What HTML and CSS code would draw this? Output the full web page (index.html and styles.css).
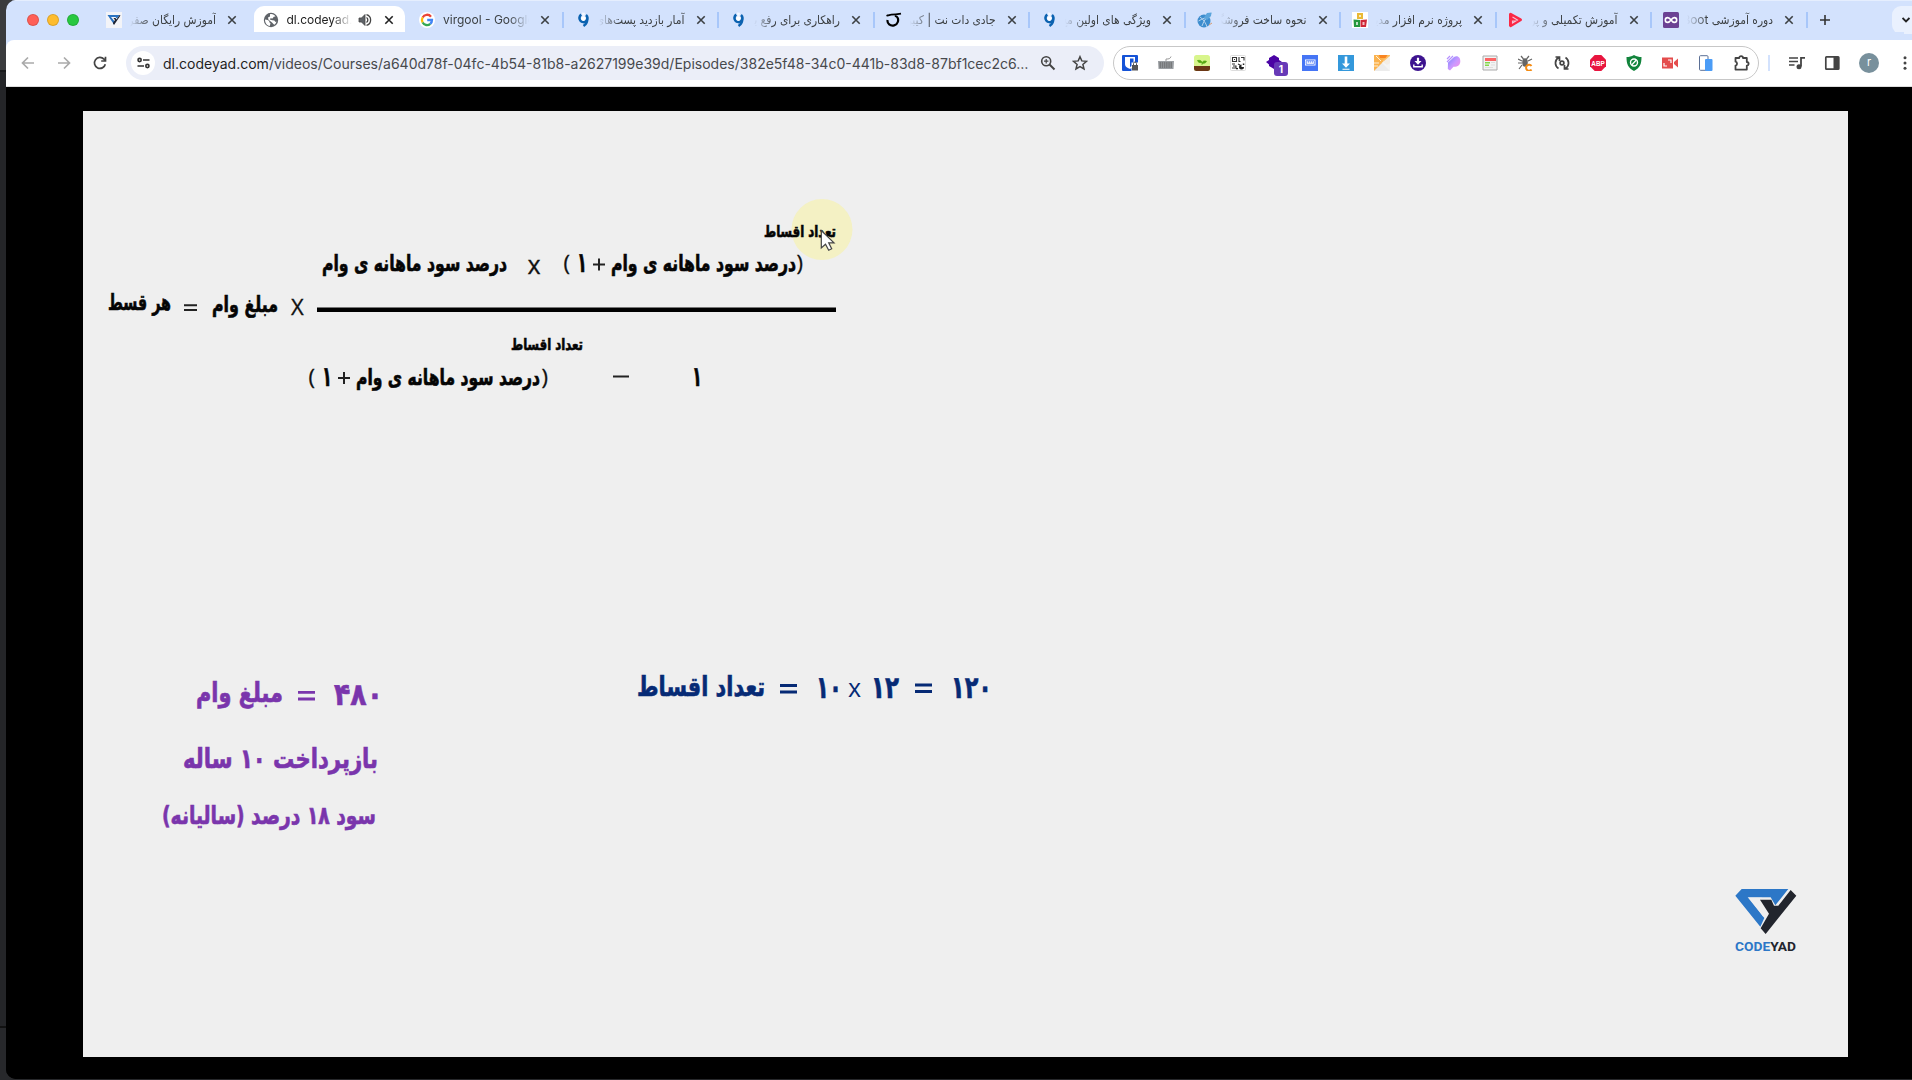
FILE: index.html
```html
<!DOCTYPE html>
<html lang="en">
<head>
<meta charset="utf-8">
<title>dl.codeyad.com</title>
<link rel="stylesheet" href="styles.css">
</head>
<body>
<svg class="defs" width="0" height="0" aria-hidden="true">
  <symbol id="close" viewBox="0 0 10 10"><path d="M1.3 1.3l7.4 7.4M8.7 1.3L1.3 8.7" fill="none" stroke="currentColor" stroke-width="1.6"/></symbol>
  <symbol id="virgool" viewBox="0 0 16 16"><path d="M6.300 2.700A4 4 0 1 0 11 3" fill="none" stroke="#0b62b0" stroke-width="2.600"/><path d="M12 6.500c.5 3.500-1 6-3.500 7.500" fill="none" stroke="#0b62b0" stroke-width="2.600"/><path d="M7 .6l3 .2-.6 3.200-2-.4z" fill="#f4f8ff"/><circle cx="8.400" cy="6.600" r="2.300" fill="#fff"/></symbol>
</svg>
<div class="window">
  <header class="tabs">
    <div class="lights"><i class="red"></i><i class="amber"></i><i class="green"></i></div>
    <div class="tab nosep">
      <svg class="fav" viewBox="0 0 16 16"><path d="M0 0h16v16H0z" fill="#f3f4f8"/><path d="M1.500 3h12L11 6.500 9.500 5H5l4 5-1 2.500z" fill="#2a72c0"/><path d="M14.500 3.500L8 13 6.800 11 9 8 7.500 6h2l1 1.500L13.500 3z" fill="#202432"/></svg>
      <span class="title rtl">آموزش رایگان صفر</span><svg class="x"><use href="#close"/></svg>
    </div>
    <div class="tab active nosep">
      <svg class="fav" viewBox="0 0 16 16"><circle cx="8" cy="8" r="7.200" fill="#5f6368"/><path d="M2 7.500c2 .3 3.600.5 4.200 1.700.4 1 .2 1.500 1.300 2L6.800 14C4 13.500 2 11 2 7.500zM7 2.200c2.500-.5 4.500.6 5.500 2.300l-1.700.3-1.300 1.700-2-.3-.7 1.300 2.500.8 2 .2 1.200 1.500 1-.5c-.4 1.500-1.200 2.500-2.300 3.300L9 10.500 5.500 7.800 5 5.500l2-1z" fill="#fff"/></svg>
      <span class="title short">dl.codeyad.com</span>
      <svg class="audio" viewBox="0 0 14 14"><path d="M1 5h2.500L7 1.500v11L3.500 9H1z" fill="#5f6368" stroke="#444" stroke-width=".8"/><path d="M8.500 4.500a3 3 0 0 1 0 5M8.500 1.600a5.600 5.600 0 0 1 0 10.800" fill="none" stroke="#444" stroke-width="1.300"/></svg>
      <svg class="x"><use href="#close"/></svg>
    </div>
    <div class="tab">
      <svg class="fav" viewBox="0 0 16 16"><circle cx="8" cy="8" r="8" fill="#fff"/><g fill="none" stroke-width="2.300"><path d="M12 4.700A5 5 0 0 0 3.600 5.500" stroke="#ea4335"/><path d="M3.600 5.500a5 5 0 0 0 0 5" stroke="#fbbc05"/><path d="M3.600 10.500A5 5 0 0 0 11.300 11.800" stroke="#34a853"/><path d="M11.300 11.800A5 5 0 0 0 13 8H8.200" stroke="#4285f4"/></g></svg>
      <span class="title">virgool - Google Search</span><svg class="x"><use href="#close"/></svg>
    </div>
    <div class="tab"><svg class="fav"><use href="#virgool"/></svg><span class="title rtl">آمار بازدید پست‌های</span><svg class="x"><use href="#close"/></svg></div>
    <div class="tab"><svg class="fav"><use href="#virgool"/></svg><span class="title rtl">راهکاری برای رفع بلا</span><svg class="x"><use href="#close"/></svg></div>
    <div class="tab">
      <svg class="fav" viewBox="0 0 16 16"><path d="M.5 3.200c1.500 1 3-.6 4.700-.6S10 2.500 15 1.600" fill="none" stroke="#000" stroke-width="1.800"/><path d="M8.800 4C12 4 12.600 7.500 11.800 10 10.700 13.500 6 14.700 3.200 12.400 1.500 11 1.300 9.500 1.600 8" fill="none" stroke="#000" stroke-width="2.200"/></svg>
      <span class="title rtl">جادی دات نت | کیبرد</span><svg class="x"><use href="#close"/></svg>
    </div>
    <div class="tab"><svg class="fav"><use href="#virgool"/></svg><span class="title rtl">ویژگی های اولین مح</span><svg class="x"><use href="#close"/></svg></div>
    <div class="tab">
      <svg class="fav" viewBox="0 0 16 16"><circle cx="7" cy="9" r="6.500" fill="#3d8dce"/><path d="M3 5c3 2 6 6 7 10M1.500 9c5-3 8-4 12-4M5 14C7 8 10 4 15 1" fill="none" stroke="#b5d3ee" stroke-width="1"/><path d="M7 5.500L10 1l4.500-.5L14 4l-4 4z" fill="#5ba5dc"/><path d="M12 13l3-2" stroke="#d69a71"/></svg>
      <span class="title rtl">نحوه ساخت فروشگا</span><svg class="x"><use href="#close"/></svg>
    </div>
    <div class="tab">
      <svg class="fav" viewBox="0 0 16 16"><path d="M0 0h16v16H0z" fill="#fff"/><path d="M5 1h6v6H5z" fill="#e9b936"/><path d="M1.500 7.500L8 8v7H2z" fill="#24983e"/><path d="M8.500 8L15 7.500 14 15H8.500z" fill="#cf2738"/><path d="M7 3h2v2H7zM4 10h2v3H4zM10.500 10h2v3h-2z" fill="#fff" opacity=".7"/></svg>
      <span class="title rtl">پروژه نرم افزار مدیر</span><svg class="x"><use href="#close"/></svg>
    </div>
    <div class="tab">
      <svg class="fav" viewBox="0 0 16 16"><path d="M2.500 2.200L12.500 7.800 2.500 13.600z" fill="#fb2845" stroke="#fb2845" stroke-width="3" stroke-linejoin="round"/><path d="M4.500 5l5 3-5 3V9h3" fill="none" stroke="#f3c2d5" stroke-width="1.100"/></svg>
      <span class="title rtl">آموزش تکمیلی و پر</span><svg class="x"><use href="#close"/></svg>
    </div>
    <div class="tab">
      <svg class="fav" viewBox="0 0 16 16"><rect width="16" height="16" rx="1.500" fill="#6b4193"/><path d="M8 8C6.800 6.300 6 5.600 4.700 5.600a2.400 2.400 0 0 0 0 4.800C6 10.400 6.800 9.700 8 8s2-2.400 3.300-2.400a2.400 2.400 0 0 1 0 4.800C10 10.400 9.200 9.700 8 8z" fill="none" stroke="#fff" stroke-width="1.600"/></svg>
      <span class="title rtl">دوره آموزشی Boot</span><svg class="x"><use href="#close"/></svg>
    </div>
    <svg class="plus" viewBox="0 0 12 12"><path d="M6 1v10M1 6h10" stroke="#333" stroke-width="1.600"/></svg>
    <div class="more"><svg width="8" height="6" viewBox="0 0 8 6"><path d="M.5 1L4 4.500 7.500 1" fill="none" stroke="#222" stroke-width="1.900"/></svg></div>
  </header>

  <nav class="toolbar">
    <div class="navs">
      <svg viewBox="0 0 16 16" class="dim"><path d="M14 8H3M8 2.500L2.500 8 8 13.500" /></svg>
      <svg viewBox="0 0 16 16" class="dim"><path d="M2 8h11M8 2.500L13.500 8 8 13.500"/></svg>
      <svg viewBox="0 0 16 16" class="dark"><path d="M13.300 9.200A5.500 5.500 0 1 1 12 4.200L13 5.200M13.500 1.800V6H9.200"/></svg>
    </div>
    <div class="omnibox">
      <span class="site"><svg width="13" height="12" viewBox="0 0 13 12" fill="none" stroke="#333" stroke-width="1.600"><circle cx="2.600" cy="3" r="1.600"/><path d="M6 3h6.500M.5 9H7"/><circle cx="10.400" cy="9" r="1.600"/></svg></span>
      <span class="url"><b>dl.codeyad.com</b>/videos/Courses/a640d78f-04fc-4b54-81b8-a2627199e39d/Episodes/382e5f48-34c0-441b-83d8-87bf1cec2c6…</span>
      <svg width="16" height="16" viewBox="0 0 16 16" fill="none" stroke="#444" stroke-width="1.600"><circle cx="6.200" cy="6.200" r="4.500"/><path d="M9.500 9.500l5 5" stroke-width="2"/><path d="M6.200 4v4.400M4 6.200h4.400" stroke-width="1.200"/></svg>
      <svg width="16" height="16" viewBox="0 0 16 16" fill="none" stroke="#444" stroke-width="1.500"><path d="M8 1.700l1.800 4.200 4.700.4-3.600 3.100 1.100 4.500L8 11.500l-4 2.400 1.100-4.500L1.500 6.300l4.700-.4z"/></svg>
    </div>
    <div class="extensions">
      <svg viewBox="0 0 16 16"><rect width="16" height="16" rx="1" fill="#1553d7"/><path d="M3 2h10v7c0 3-3 4-5 5-2-1-5-2-5-5z" fill="#fff"/><path d="M8 3.500h3.500v5C11.500 10 10 11 8 12z" fill="#1553d7"/><path d="M9.500 7.500h7V16h-7z" fill="#fff"/><path d="M10 10h6v5.500h-6z" fill="#555"/><path d="M11.500 10V8.500a1.500 1.500 0 0 1 3 0V10" fill="none" stroke="#555"/></svg>
      <svg viewBox="0 0 16 16"><path d="M0 6h16l-.5 8H.5z" fill="#9b9fa3"/><path d="M1.500 8h13M1.500 10h13M1.500 12h13" stroke="#555" stroke-dasharray="1.500 .7"/><path d="M8 6V4c3 0 4 0 5-2.500" fill="none" stroke="#999"/></svg>
      <svg viewBox="0 0 16 16"><rect width="16" height="16" rx="2.500" fill="#d8f58c"/><path d="M0 11h16v2.500a2.500 2.500 0 0 1-2.500 2.500h-11A2.500 2.500 0 0 1 0 13.500z" fill="#6b3715"/><path d="M8 10V7.500C5 8 4 7 3.500 5.500 6 5 7.500 5.500 8 7.500c1-1.500 2.500-2 4.500-1.200C12 8 10 8.600 8 8.500" fill="#56a711" stroke="#56a711" stroke-width=".7"/></svg>
      <svg viewBox="0 0 16 16"><rect x=".5" y=".5" width="15" height="15" rx="1" fill="#fff" stroke="#ddd"/><path d="M2.500 2.500h4v4h-4zM4 4.500h1M9 2v4.500h1.500M11 2.500h3v3M2 9h3M3 11h3v2H2M8 9l2 1" fill="none" stroke="#333" stroke-width="1.100"/><path d="M11.500 9.500a2.500 2.500 0 1 0 2.500 2.500h-2.500zM6 13h2v1.200H6zM12.800 8.500h1.500v1.500h-1.500z" fill="#222"/></svg>
      <span class="badged"><svg viewBox="0 0 16 16"><path d="M8 0l5 3v2l3 2-3 2v2l-5 3-5-3V9.500L0 7l3-2V3z" fill="#4a04a4"/></svg><b class="badge">1</b></span>
      <svg viewBox="0 0 16 16"><path d="M0 0h16v16H0z" fill="#4575f5"/><path d="M3 4.500h10.500v6H3z" fill="#fff"/><path d="M4.200 5.700h8.100v3.600H4.200zM6.300 6v1.700M8.300 6v1.700M10.300 6v1.700" fill="none" stroke="#4575f5" stroke-width=".8"/></svg>
      <svg viewBox="0 0 16 16"><path d="M0 0h16v16H0z" fill="#3498db"/><path d="M6.700 1.500h2.600v7H12l-4 4.200-4-4.200h2.700zM4.500 13.800h7v1h-7z" fill="#fff"/></svg>
      <svg viewBox="0 0 16 16"><path d="M0 0h12l4 4v12H0z" fill="#ececec"/><path d="M0 0h16L0 16z" fill="#fbb34f"/><path d="M5 0h8l-1 3H6z" fill="#f98420"/><path d="M16 0v16L8 8z" fill="#f4f4f4"/><path d="M9 7l4-4h3v5l-3 2z" fill="#f3ede5"/><path d="M2 1l5 5M0 8h5M0 11h4" stroke="#fff0d6" stroke-width="1"/><path d="M9 6l7-6" stroke="#fbc16e" stroke-width="1.500"/></svg>
      <svg viewBox="0 0 16 16"><circle cx="8" cy="8" r="8" fill="#3d138f"/><path d="M6.900 2.800h2.200V6h2.400L8 9.700 4.500 6h2.400z" fill="#fff"/><path d="M3.800 9.500v2.300h8.400V9.500" fill="none" stroke="#fff" stroke-width="1.400"/></svg>
      <svg viewBox="0 0 16 16"><defs><linearGradient id="pg" x2="1" y2="1"><stop stop-color="#7785ff"/><stop offset=".5" stop-color="#c998ff"/><stop offset="1" stop-color="#ff8fe0"/></linearGradient></defs><path d="M2 7.500L8 2c4-2 6.500 1 6.300 4.500-.2 3.500-2.500 5.500-6.800 5.300L4 15.500 1.800 14z" fill="url(#pg)"/><path d="M1 4l3-3M1 7l6-6" stroke="#b58fff" stroke-width="1.200"/></svg>
      <svg viewBox="0 0 16 16"><path d="M1 1h14v14H1z" fill="#f3f3f3" stroke="#aaa"/><path d="M3 3h11v3H3z" fill="#fb6464"/><path d="M3 7h5v1.500H3zM3 9.500h4V11H3z" fill="#84d64a"/><path d="M9 7.500h4M9 10h4M3 12.500h8" stroke="#ddd"/></svg>
      <svg viewBox="0 0 16 16"><ellipse cx="7" cy="7.500" rx="2.800" ry="4.200" fill="#666"/><path d="M3 1l2.500 3M11 1L8.500 4M0 4l4 2M14 4l-4 2M0 8h4M1 14l3-4" stroke="#666" stroke-width="1.200"/><path d="M13.500 11A3 3 0 1 0 13.500 14.500" fill="none" stroke="#f58c13" stroke-width="2"/></svg>
      <svg viewBox="0 0 16 16" fill="none" stroke="#444" stroke-width="1.700"><path d="M4.500 13.500A6.500 6.500 0 0 1 4.500 2.500M11.500 2.500a6.500 6.500 0 0 1 0 11M1.500 2h4v4M14.500 14h-4v-4"/><circle cx="8" cy="8" r="1.900"/></svg>
      <svg viewBox="0 0 16 16"><path d="M4.700 0h6.600L16 4.700v6.600L11.300 16H4.700L0 11.300V4.700z" fill="#e8153f"/><text x="1.300" y="10.800" textLength="13.400" lengthAdjust="spacingAndGlyphs" class="abp">ABP</text></svg>
      <svg viewBox="0 0 16 16"><path d="M8 0c2.500 1.500 5 2 7.500 2 0 7-1.500 11-7.500 14C2 13 .5 9 .5 2 3 2 5.500 1.500 8 0z" fill="#12843c"/><circle cx="8" cy="7.500" r="3.500" fill="none" stroke="#fff" stroke-width="1.400"/><path d="M5.700 10l4.600-5" stroke="#fff" stroke-width="1.400"/></svg>
      <svg viewBox="0 0 16 16"><path d="M0 2.500h11v11H0zM12 7l4-3.500v9L12 9z" fill="#e44c4c"/><path d="M6 5h3v3M5 11H2V8" fill="none" stroke="#fff" stroke-width="1.200"/></svg>
      <svg viewBox="0 0 16 16"><rect x="1.500" y=".7" width="8.500" height="14.600" rx="1" fill="#fff" stroke="#5b6f95"/><rect x="7" y="4" width="7.500" height="12" rx="1" fill="#4b9cf6"/></svg>
      <svg viewBox="0 0 16 16"><path d="M1.500 3h3.700a1.900 1.900 0 0 1 3.800 0h3.800v4a1.800 1.800 0 0 1 0 3.600v4H1.500v-4a2 2 0 0 0 0-3.900z" fill="none" stroke="#444" stroke-width="1.800" stroke-linejoin="round"/></svg>
    </div>
    <div class="divider"></div>
    <div class="right">
      <svg viewBox="0 0 16 16"><path d="M0 3h9M0 6.500h9M0 10h5.500" stroke="#444" stroke-width="1.600"/><path d="M12 11.500V2.800h4" fill="none" stroke="#444" stroke-width="1.800"/><circle cx="10" cy="11.700" r="2.500" fill="#444"/></svg>
      <svg viewBox="0 0 16 16"><rect x="1.800" y="1.800" width="13" height="12.400" rx=".7" fill="none" stroke="#444" stroke-width="1.700"/><path d="M9.500 2h5v12h-5z" fill="#444"/></svg>
      <span class="avatar">r</span>
      <svg viewBox="0 0 16 16" fill="#444"><circle cx="8" cy="2.700" r="1.500"/><circle cx="8" cy="8" r="1.500"/><circle cx="8" cy="13.300" r="1.500"/></svg>
    </div>
  </nav>

  <main class="player">
    <svg class="slide" width="1765" height="946" viewBox="83 111 1765 946">
      <circle cx="822" cy="229.500" r="30.500" fill="#f4f1c4"/>
      <g class="fa" fill="#050505" stroke="#050505">
        <g font-size="16">
          <text x="764" y="236.500" textLength="72">تعداد اقساط</text>
          <text x="511" y="350" textLength="72">تعداد اقساط</text>
        </g>
        <g font-size="22">
          <text x="322" y="271" textLength="185">درصد سود ماهانه ی وام</text>
          <text x="611" y="271" textLength="185">درصد سود ماهانه ی وام</text>
          <text x="356" y="384.500" textLength="184">درصد سود ماهانه ی وام</text>
          <text x="108" y="310" textLength="63">هر قسط</text>
          <text x="212" y="312" textLength="66">مبلغ وام</text>
        </g>
        <g font-size="28">
          <text x="577" y="272" textLength="10">۱</text>
          <text x="322" y="385.500" textLength="10">۱</text>
          <text x="692" y="385.500" textLength="10">۱</text>
        </g>
      </g>
      <g class="op" fill="#111" stroke="#111" stroke-width=".3" font-size="25">
        <text x="527.500" y="274">x</text><text x="291" y="315" font-size="22">X</text>
        <text x="563.500" y="271" font-size="22">(</text><text x="796.500" y="271" font-size="22">)</text>
        <text x="308.500" y="384.500" font-size="22">(</text><text x="541.500" y="384.500" font-size="22">)</text>
      </g>
      <path d="M593 264.500h12M599 258.500v12M338 378h12M344 372v12M184 305.200h13M184 310h13M613 376.500h16" stroke="#222" stroke-width="2"/>
      <path d="M317 309.700h519" stroke="#000" stroke-width="4.600"/>
      <g class="fa" fill="#7a35ac" stroke="#7a35ac" font-size="27">
        <text x="196" y="702" textLength="87">مبلغ وام</text>
        <text x="334" y="705" textLength="49" font-size="31">۴۸۰</text>
        <text x="183" y="767.500" textLength="195">بازپرداخت ۱۰ ساله</text>
        <text x="162" y="824" textLength="214" font-size="25">سود ۱۸ درصد (سالیانه)</text>
      </g>
      <path d="M298 692.300h17M298 699h17" stroke="#7a35ac" stroke-width="2.800"/>
      <g class="fa" fill="#062a75" stroke="#062a75" font-size="27">
        <text x="637" y="695.500" textLength="128">تعداد اقساط</text>
        <g font-size="31"><text x="816" y="698" textLength="26">۱۰</text><text x="871" y="698" textLength="28">۱۲</text><text x="951" y="698" textLength="41">۱۲۰</text></g>
      </g>
      <text class="op" x="848" y="697" font-size="25" fill="#062a75">x</text>
      <path d="M780 685.500h17M780 692h17M915 685h17M915 691.500h17" stroke="#062a75" stroke-width="2.800"/>
      <path d="M821.300 230.500v17.500l4.200-3.700 3.200 6 3-1.500-3-6h5.300z" fill="#fff" stroke="#444" stroke-width="1.200"/>
      <g transform="translate(1700 860) scale(.3333)">
        <path d="M125 87H265L226 136 212 112H143L193 174 181 200 106 107z" fill="#2c77c7"/>
        <path d="M147 113H185L205 145 190 170z" fill="#efefef"/>
        <path d="M272 90L289 107 197 222 182 205 207 161 180 119H214L222 137H235z" fill="#22252d"/>
      </g>
      <text class="brand" x="1735" y="951" textLength="61" lengthAdjust="spacingAndGlyphs"><tspan fill="#2c77c7">CODE</tspan><tspan fill="#22252d">YAD</tspan></text>
    </svg>
  </main>
</div>
<script src="script.js"></script>
</body>
</html>
```
FILE: script.js
```js
// Slide phrases fit their column by stretching glyphs together with the gaps.
document.querySelectorAll('.fa text').forEach(function (t) {
  t.setAttribute('lengthAdjust', 'spacingAndGlyphs');
});
```
FILE: styles.css
```css
* { box-sizing: border-box; }
body {
  margin: 0;
  width: 1912px;
  height: 1080px;
  overflow: hidden;
  padding-left: 6px;
  background: linear-gradient(#3a3b3d 0 70px, #18191b 70px 72px, #242528 72px 1026px, #111 1026px 1028px, #27282b 1028px);
  font-family: Inter, "DejaVu Sans Condensed", "DejaVu Sans", sans-serif;
  color: #3c4043;
}
svg { display: block; flex: none; }
.defs { position: absolute; }
.window {
  height: 1079px;
  display: flex;
  flex-direction: column;
  background: #000;
  border-radius: 10px 0 0 10px;
  overflow: hidden;
}
.tabs {
  height: 40px;
  padding-bottom: 1px;
  display: flex;
  align-items: center;
  background: #d3e2fd;
  border-top: 1px solid #e5eefe;
}
.lights { display: flex; gap: 8px; width: 89px; padding-left: 21px; flex: none; }
.lights i { width: 12px; height: 12px; border-radius: 50%; border: 1px solid #0002; }
.red { background: #ff5f57; }
.amber { background: #febc2e; }
.green { background: #28c840; }
.tab {
  width: 155.500px;
  height: 34px;
  padding-left: 11px;
  display: flex;
  align-items: center;
  flex: none;
  background: linear-gradient(#a8c7fa, #a8c7fa) right 9px / 2px 16px no-repeat;
}
.tab.nosep { background: none; }
.tab.active {
  align-self: flex-end;
  margin: 0 3px -1px;
  width: 151.500px;
  padding-left: 9px;
  background: #fff;
  border-radius: 10px 10px 0 0;
  color: #222;
}
.tab.active > * { margin-top: -6px; }
.fav { width: 16px; height: 16px; }
.title {
  width: 86px;
  margin-left: 8px;
  font: 12px/20px Inter, "DejaVu Sans Condensed", "DejaVu Sans", sans-serif;
  white-space: nowrap;
  overflow: hidden;
  -webkit-mask-image: linear-gradient(to left, transparent, #000 20px);
  mask-image: linear-gradient(to left, transparent, #000 20px);
}
.title.rtl {
  direction: rtl;
  font-size: 11.900px;
  -webkit-mask-image: linear-gradient(to right, transparent, #000 20px);
  mask-image: linear-gradient(to right, transparent, #000 20px);
}
.title.short { width: 65px; }
.audio { width: 14px; height: 14px; margin-left: 6px; }
.x { width: 10px; height: 10px; margin-left: 11px; }
.active .x { margin-left: 12px; }
.plus { width: 12px; height: 12px; margin-left: 11px; }
.more {
  width: 28px;
  height: 28px;
  margin-left: 61px;
  padding-left: 10px;
  display: flex;
  align-items: center;
  background: #eaf1fe;
  border-radius: 9px;
  flex: none;
}
.toolbar {
  height: 47px;
  display: flex;
  align-items: center;
  background: #fff;
  border-bottom: 1px solid #ddd;
  border-radius: 8px 0 0 0;
  box-shadow: -8px -8px 0 #d3e2fd;
  overflow: hidden;
}
.navs { display: flex; gap: 20px; width: 120px; padding-left: 14px; flex: none; }
.navs svg { width: 16px; height: 16px; fill: none; stroke-width: 1.700; }
.dim { stroke: #aaa; }
.dark { stroke: #444; }
.omnibox {
  width: 978px;
  height: 34px;
  padding-left: 5px;
  display: flex;
  align-items: center;
  gap: 16px;
  background: #ebeef8;
  border-radius: 17px;
  flex: none;
}
.site { width: 24px; height: 24px; border-radius: 50%; background: #fff; display: grid; place-items: center; }
.url { width: 862px; margin-left: -8px; margin-right: -1px; font-size: 14.030px; white-space: nowrap; color: #47494d; }
.url b { font-weight: 400; color: #1f1f1f; }
.extensions {
  width: 646px;
  height: 34px;
  margin-left: 9px;
  padding-left: 8px;
  display: flex;
  align-items: center;
  gap: 20px;
  border: 1px solid #c7c7c7;
  border-radius: 17px;
  flex: none;
}
.extensions svg { width: 16px; height: 16px; }
.badged { position: relative; }
.badge {
  position: absolute;
  left: 8px;
  top: 7px;
  width: 14px;
  height: 14px;
  border-radius: 3px;
  background: #673ab7;
  color: #fff;
  font-size: 10px;
  line-height: 14px;
  text-align: center;
}
.abp { font: bold 7.500px "Liberation Sans", sans-serif; fill: #fff; }
.divider { width: 2px; height: 16px; margin-left: 9px; background: #d3e2fd; flex: none; }
.right { display: flex; align-items: center; gap: 19px; margin-left: 19px; }
.right svg { width: 16px; height: 16px; }
.right svg:last-child { margin-left: -1px; }
.avatar {
  width: 20px;
  height: 20px;
  border-radius: 50%;
  background: #78909c;
  color: #fff;
  font-size: 11px;
  line-height: 19px;
  text-align: center;
}
.player { flex: 1; padding: 24px 0 0 77px; background: #000; }
.slide { background: #efefef; }
.fa text { direction: rtl; text-anchor: end; }
.fa { font-family: "DejaVu Sans Condensed", "DejaVu Sans", sans-serif; font-weight: bold; stroke-width: .6; }
.op { font-family: "Open Sans", sans-serif; }
.brand { font: bold 13px Roboto, sans-serif; }
```
